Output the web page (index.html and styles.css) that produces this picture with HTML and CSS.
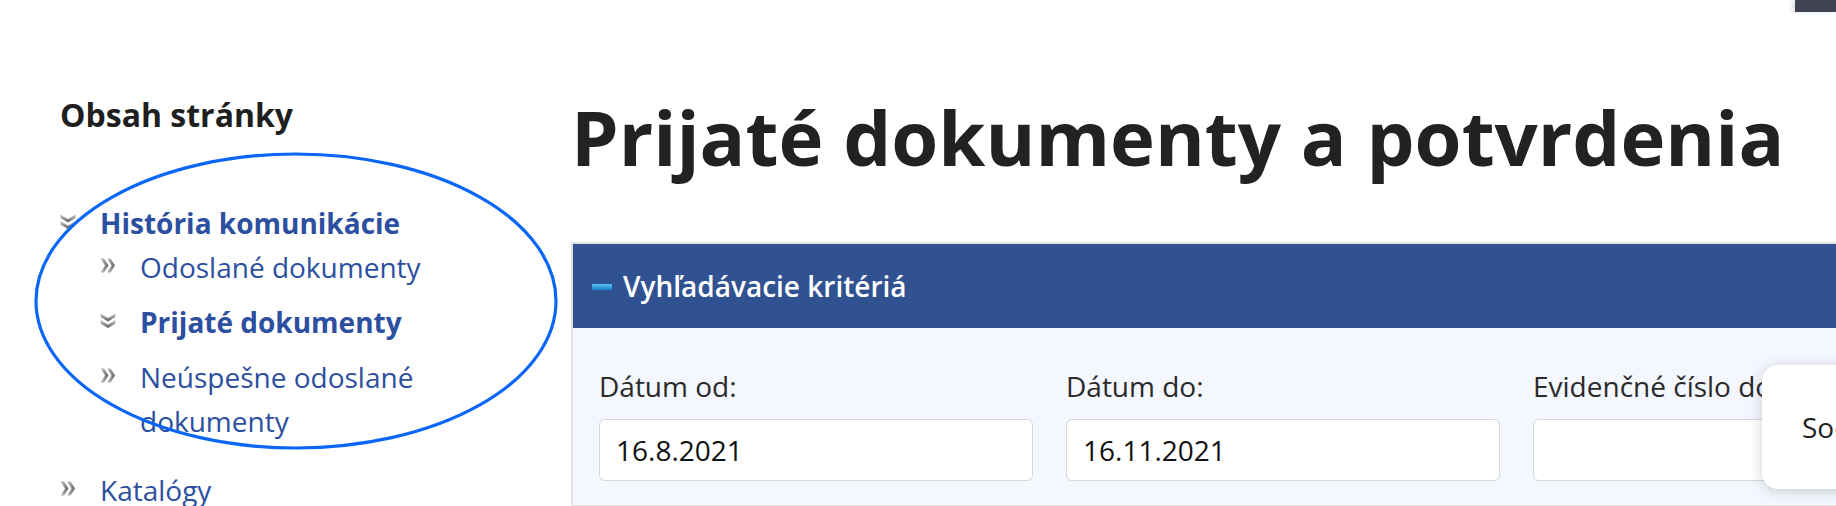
FILE: index.html
```html
<!DOCTYPE html>
<html lang="sk">
<head>
<meta charset="utf-8">
<title>Prijaté dokumenty a potvrdenia</title>
<link rel="stylesheet" href="styles.css">
</head>
<body>
<div class="corner-tab"></div>
<div class="page">
  <aside class="toc">
    <h2 class="toc-title">Obsah stránky</h2>
    <ul class="toc-list">
      <li class="toc-item">
        <span class="ico"><svg width="16" height="16" viewBox="0 0 16 16"><defs><linearGradient id="g1" x1="0" y1="0" x2="0" y2="1"><stop offset="0" stop-color="#d0d0d0"/><stop offset="1" stop-color="#5a5a5a"/></linearGradient><linearGradient id="g2" x1="0" y1="0" x2="1" y2="0"><stop offset="0" stop-color="#d0d0d0"/><stop offset="1" stop-color="#5a5a5a"/></linearGradient></defs><path d="M0.5 0.5 L0.5 4 L8 8.5 L15.5 4 L15.5 0.5 L8 5 Z" fill="url(#g1)"/><path d="M0.5 7 L0.5 10.5 L8 15 L15.5 10.5 L15.5 7 L8 11.5 Z" fill="url(#g1)"/></svg></span>
        <div class="item-body">
          <a class="link strong">História komunikácie</a>
          <ul class="sub-list">
            <li class="toc-item sub">
              <span class="ico"><svg width="16" height="16" viewBox="0 0 16 16"><path d="M0.5 0.5 L4 0.5 L8.5 7.5 L4 14.5 L0.5 14.5 L5 7.5 Z" fill="url(#g2)"/><path d="M7 0.5 L10.5 0.5 L15 7.5 L10.5 14.5 L7 14.5 L11.5 7.5 Z" fill="url(#g2)"/></svg></span>
              <a class="link">Odoslané dokumenty</a>
            </li>
            <li class="toc-item sub">
              <span class="ico"><svg width="16" height="16" viewBox="0 0 16 16"><path d="M0.5 0.5 L0.5 4 L8 8.5 L15.5 4 L15.5 0.5 L8 5 Z" fill="url(#g1)"/><path d="M0.5 7 L0.5 10.5 L8 15 L15.5 10.5 L15.5 7 L8 11.5 Z" fill="url(#g1)"/></svg></span>
              <a class="link strong">Prijaté dokumenty</a>
            </li>
            <li class="toc-item sub">
              <span class="ico"><svg width="16" height="16" viewBox="0 0 16 16"><path d="M0.5 0.5 L4 0.5 L8.5 7.5 L4 14.5 L0.5 14.5 L5 7.5 Z" fill="url(#g2)"/><path d="M7 0.5 L10.5 0.5 L15 7.5 L10.5 14.5 L7 14.5 L11.5 7.5 Z" fill="url(#g2)"/></svg></span>
              <a class="link">Neúspešne odoslané dokumenty</a>
            </li>
          </ul>
        </div>
      </li>
      <li class="toc-item top-gap">
        <span class="ico"><svg width="16" height="16" viewBox="0 0 16 16"><path d="M0.5 0.5 L4 0.5 L8.5 7.5 L4 14.5 L0.5 14.5 L5 7.5 Z" fill="url(#g2)"/><path d="M7 0.5 L10.5 0.5 L15 7.5 L10.5 14.5 L7 14.5 L11.5 7.5 Z" fill="url(#g2)"/></svg></span>
        <a class="link">Katalógy</a>
      </li>
    </ul>
    <svg class="highlight" width="600" height="460" viewBox="0 0 600 460"><ellipse cx="296" cy="301" rx="260" ry="147" fill="none" stroke="#0a66f7" stroke-width="3.2"/></svg>
  </aside>
  <main class="main">
    <h1 class="page-title">Prijaté dokumenty a potvrdenia</h1>
    <section class="panel">
      <div class="panel-head"><span class="minus"></span><span class="panel-title">Vyhľadávacie kritériá</span></div>
      <div class="panel-body">
        <div class="field">
          <label class="field-label">Dátum od:</label>
          <input class="field-input" type="text" value="16.8.2021">
        </div>
        <div class="field">
          <label class="field-label">Dátum do:</label>
          <input class="field-input" type="text" value="16.11.2021">
        </div>
        <div class="field">
          <label class="field-label">Evidenčné číslo dokumentu:</label>
          <input class="field-input" type="text" value="">
        </div>
      </div>
    </section>
  </main>
</div>
<div class="popup">Sociálna poisťovňa</div>
</body>
</html>
```
FILE: styles.css
```css
html, body {
  margin: 0;
  padding: 0;
  background: #ffffff;
}
body {
  font-family: "Open Sans", "Noto Sans", sans-serif;
  color: #222;
  width: 1836px;
  height: 506px;
  overflow: hidden;
  position: relative;
}
.corner-tab {
  position: absolute;
  top: 0;
  left: 1795px;
  width: 41px;
  height: 12px;
  background: #3f4353;
  box-shadow: -3px 0 5px rgba(0,0,0,0.12);
}
.page {
  display: flex;
  align-items: flex-start;
}
.toc {
  position: relative;
  width: 440px;
  flex: none;
  padding: 95px 0 0 60px;
  margin-right: 71px;
}
.toc-title {
  margin: 0;
  font-size: 32px;
  line-height: 40px;
  font-weight: 700;
  color: #1f1f1f;
}
.toc-list, .sub-list {
  list-style: none;
  margin: 0;
  padding: 0;
}
.toc-list {
  margin-top: 66px;
}
.toc-item {
  display: flex;
  align-items: flex-start;
}
.toc-item.sub + .toc-item.sub {
  margin-top: 11px;
}
.toc-item.top-gap {
  margin-top: 25px;
}
.ico {
  flex: none;
  width: 40px;
  height: 44px;
  padding-top: 13px;
  box-sizing: border-box;
}
.ico svg { display: block; }
.item-body { flex: 1; }
.link {
  display: block;
  font-size: 28px;
  line-height: 44px;
  color: #2c4f9f;
  text-decoration: none;
}
.link.strong { font-weight: 700; }
.highlight {
  position: absolute;
  left: 0;
  top: 0;
  pointer-events: none;
}
.main {
  flex: none;
  width: 1400px;
  padding-top: 91px;
}
.page-title {
  margin: 0 0 59px 0;
  font-size: 76px;
  line-height: 92px;
  font-weight: 700;
  color: #222;
  white-space: nowrap;
}
.panel {
  border: 2px solid #e0e0e0;
  background: #f4f7fd;
}
.panel-head {
  height: 84px;
  background: #315291;
  display: flex;
  align-items: center;
  padding-left: 19px;
  color: #fff;
}
.minus {
  width: 20px;
  height: 6px;
  background: linear-gradient(#5cc0f0, #1a82c8);
  margin-right: 11px;
  margin-top: 2px;
}
.panel-title {
  font-size: 28px;
  font-weight: 600;
}
.panel-body {
  display: flex;
  gap: 33px;
  padding: 38px 0 24px 26px;
}
.field {
  width: 434px;
  flex: none;
  display: flex;
  flex-direction: column;
  gap: 13px;
}
.field-label {
  font-size: 28px;
  line-height: 40px;
  color: #2a2a2a;
  white-space: nowrap;
}
.field-input {
  box-sizing: border-box;
  width: 434px;
  height: 62px;
  border: 1.5px solid #d4d6da;
  border-radius: 6px;
  background: #fff;
  padding: 0 16px;
  font-family: "Open Sans", "Noto Sans", sans-serif;
  font-size: 28px;
  color: #111;
  outline: none;
}
.popup {
  position: absolute;
  left: 1762px;
  top: 365px;
  width: 300px;
  height: 124px;
  box-sizing: border-box;
  padding: 42px 0 0 40px;
  background: #fff;
  border-radius: 16px;
  box-shadow: 0 2px 14px rgba(0,0,0,0.18);
  font-size: 28px;
  line-height: 40px;
  color: #222;
  white-space: nowrap;
}
```
